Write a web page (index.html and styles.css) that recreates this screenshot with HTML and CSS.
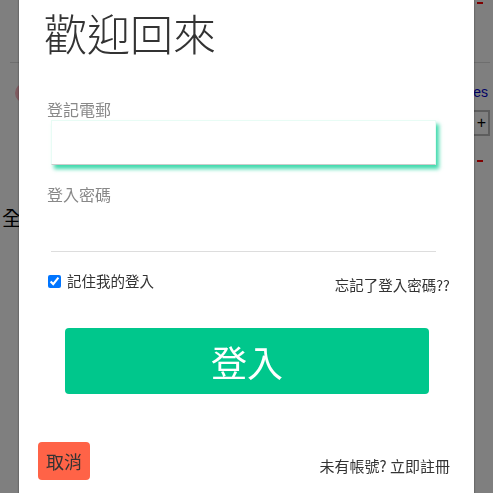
FILE: index.html
```html
<!DOCTYPE html>
<html lang="zh-Hant">
<head>
    <meta charset="UTF-8">
    <meta name="viewport" content="width=device-width, initial-scale=1.0">
    <title>登入</title>
    <link rel="stylesheet" href="styles.css">
</head>
<body>
    <div class="page">
        <div class="topbar">
            <span class="mark"></span>
        </div>
        <div class="row">
            <span class="avatar"></span>
            <a class="link" href="#">Services</a>
        </div>
        <div class="row right">
            <button class="add-btn">新增 +</button>
        </div>
        <div class="row right">
            <span class="mark"></span>
        </div>
        <div class="side-text">全部</div>
    </div>

    <div class="overlay">
        <div class="modal">
            <h1 class="title">歡迎回來</h1>

            <div class="field">
                <label for="email">登記電郵</label>
                <input type="email" id="email" class="input focused">
            </div>

            <div class="field">
                <label for="password">登入密碼</label>
                <input type="password" id="password" class="input line">
            </div>

            <div class="options">
                <label class="remember"><input type="checkbox" checked>記住我的登入</label>
                <a class="forgot" href="#">忘記了登入密碼??</a>
            </div>

            <button class="login-btn">登入</button>

            <div class="footer">
                <button class="cancel-btn">取消</button>
                <a class="register" href="#">未有帳號? 立即註冊</a>
            </div>
        </div>
    </div>
</body>
</html>
```

FILE: styles.css
```css
body {
    margin: 0;
    font-family: "Noto Sans CJK TC", "Noto Sans", sans-serif;
    background-color: #fff;
    color: #000;
}
.page {
    padding: 0 3px 0 10px;
    display: flex;
    flex-direction: column;
}
.topbar {
    height: 62px;
    border-bottom: 1px solid #ddd;
    display: flex;
    justify-content: flex-end;
    align-items: flex-start;
}
.mark {
    display: block;
    width: 6px;
    height: 2px;
    background-color: #ff0000;
    margin: 2px 7px 0 0;
}
.row {
    display: flex;
    justify-content: space-between;
    align-items: flex-start;
}
.row.right {
    justify-content: flex-end;
}
.avatar {
    width: 20px;
    height: 20px;
    border-radius: 50%;
    background-color: #ffb6c1;
    margin: 20px 0 0 5px;
}
.link {
    color: #0000cc;
    font-family: "Liberation Sans", sans-serif;
    font-size: 14px;
    margin-top: 21px;
    margin-right: 2px;
    text-decoration: none;
}
.add-btn {
    margin-top: 7px;
    height: 26px;
    font-family: "Liberation Sans", sans-serif;
    font-size: 16px;
    background-color: #fff;
    border: 2px solid #bbb;
    padding: 0 2px;
}
.row.right .mark {
    margin-top: 24px;
}
.side-text {
    margin: 41px 0 0 -8px;
    font-size: 20px;
}

.overlay {
    position: fixed;
    inset: 0;
    background-color: rgba(0, 0, 0, 0.5);
    display: flex;
    justify-content: center;
    align-items: flex-start;
    overflow: hidden;
}
.modal {
    width: 455px;
    margin-top: -17px;
    padding: 20px 24px 40px 25px;
    box-sizing: border-box;
    background-color: #fff;
    box-shadow: 0 0 2px rgba(0, 0, 0, 0.5);
}
.title {
    margin: 0 0 37px;
    font-size: 43px;
    font-weight: 200;
    line-height: 58px;
    color: #333;
}
.field {
    margin-bottom: 18px;
}
.field label {
    display: block;
    margin-left: 3px;
    font-size: 16px;
    line-height: 22px;
    color: #888;
}
.input {
    display: block;
    box-sizing: border-box;
    width: 385px;
    margin-left: 7px;
    height: 45px;
    outline: none;
    background-color: #fff;
}
.input.focused {
    border: 1px solid #e8fcf5;
    border-bottom-color: #ccc;
    box-shadow: 3px 4px 4px rgba(0, 205, 145, 0.75);
}
.input.line {
    border: none;
    border-bottom: 1px solid #ddd;
    height: 47px;
}
.options {
    display: flex;
    justify-content: space-between;
    align-items: flex-start;
    margin-top: 1px;
    font-size: 14.5px;
    color: #333;
}
.remember input {
    margin: 5px 6px 0 4px;
    vertical-align: top;
}
.forgot {
    margin-top: 4px;
    color: #333;
    text-decoration: none;
}
.login-btn {
    display: block;
    width: 364px;
    height: 66px;
    margin: 33px auto 0;
    background-color: #00c78c;
    color: #fff;
    border: none;
    border-radius: 4px;
    font-family: inherit;
    font-size: 36px;
    cursor: pointer;
}
.footer {
    display: flex;
    justify-content: space-between;
    align-items: flex-end;
    margin-top: 48px;
}
.cancel-btn {
    margin-left: -6px;
    height: 38px;
    padding: 0 8px;
    background-color: #ff6347;
    color: #333;
    border: none;
    border-radius: 4px;
    font-family: inherit;
    font-size: 18px;
    cursor: pointer;
}
.register {
    margin-bottom: 4px;
    font-size: 15px;
    color: #333;
    text-decoration: none;
}
```
